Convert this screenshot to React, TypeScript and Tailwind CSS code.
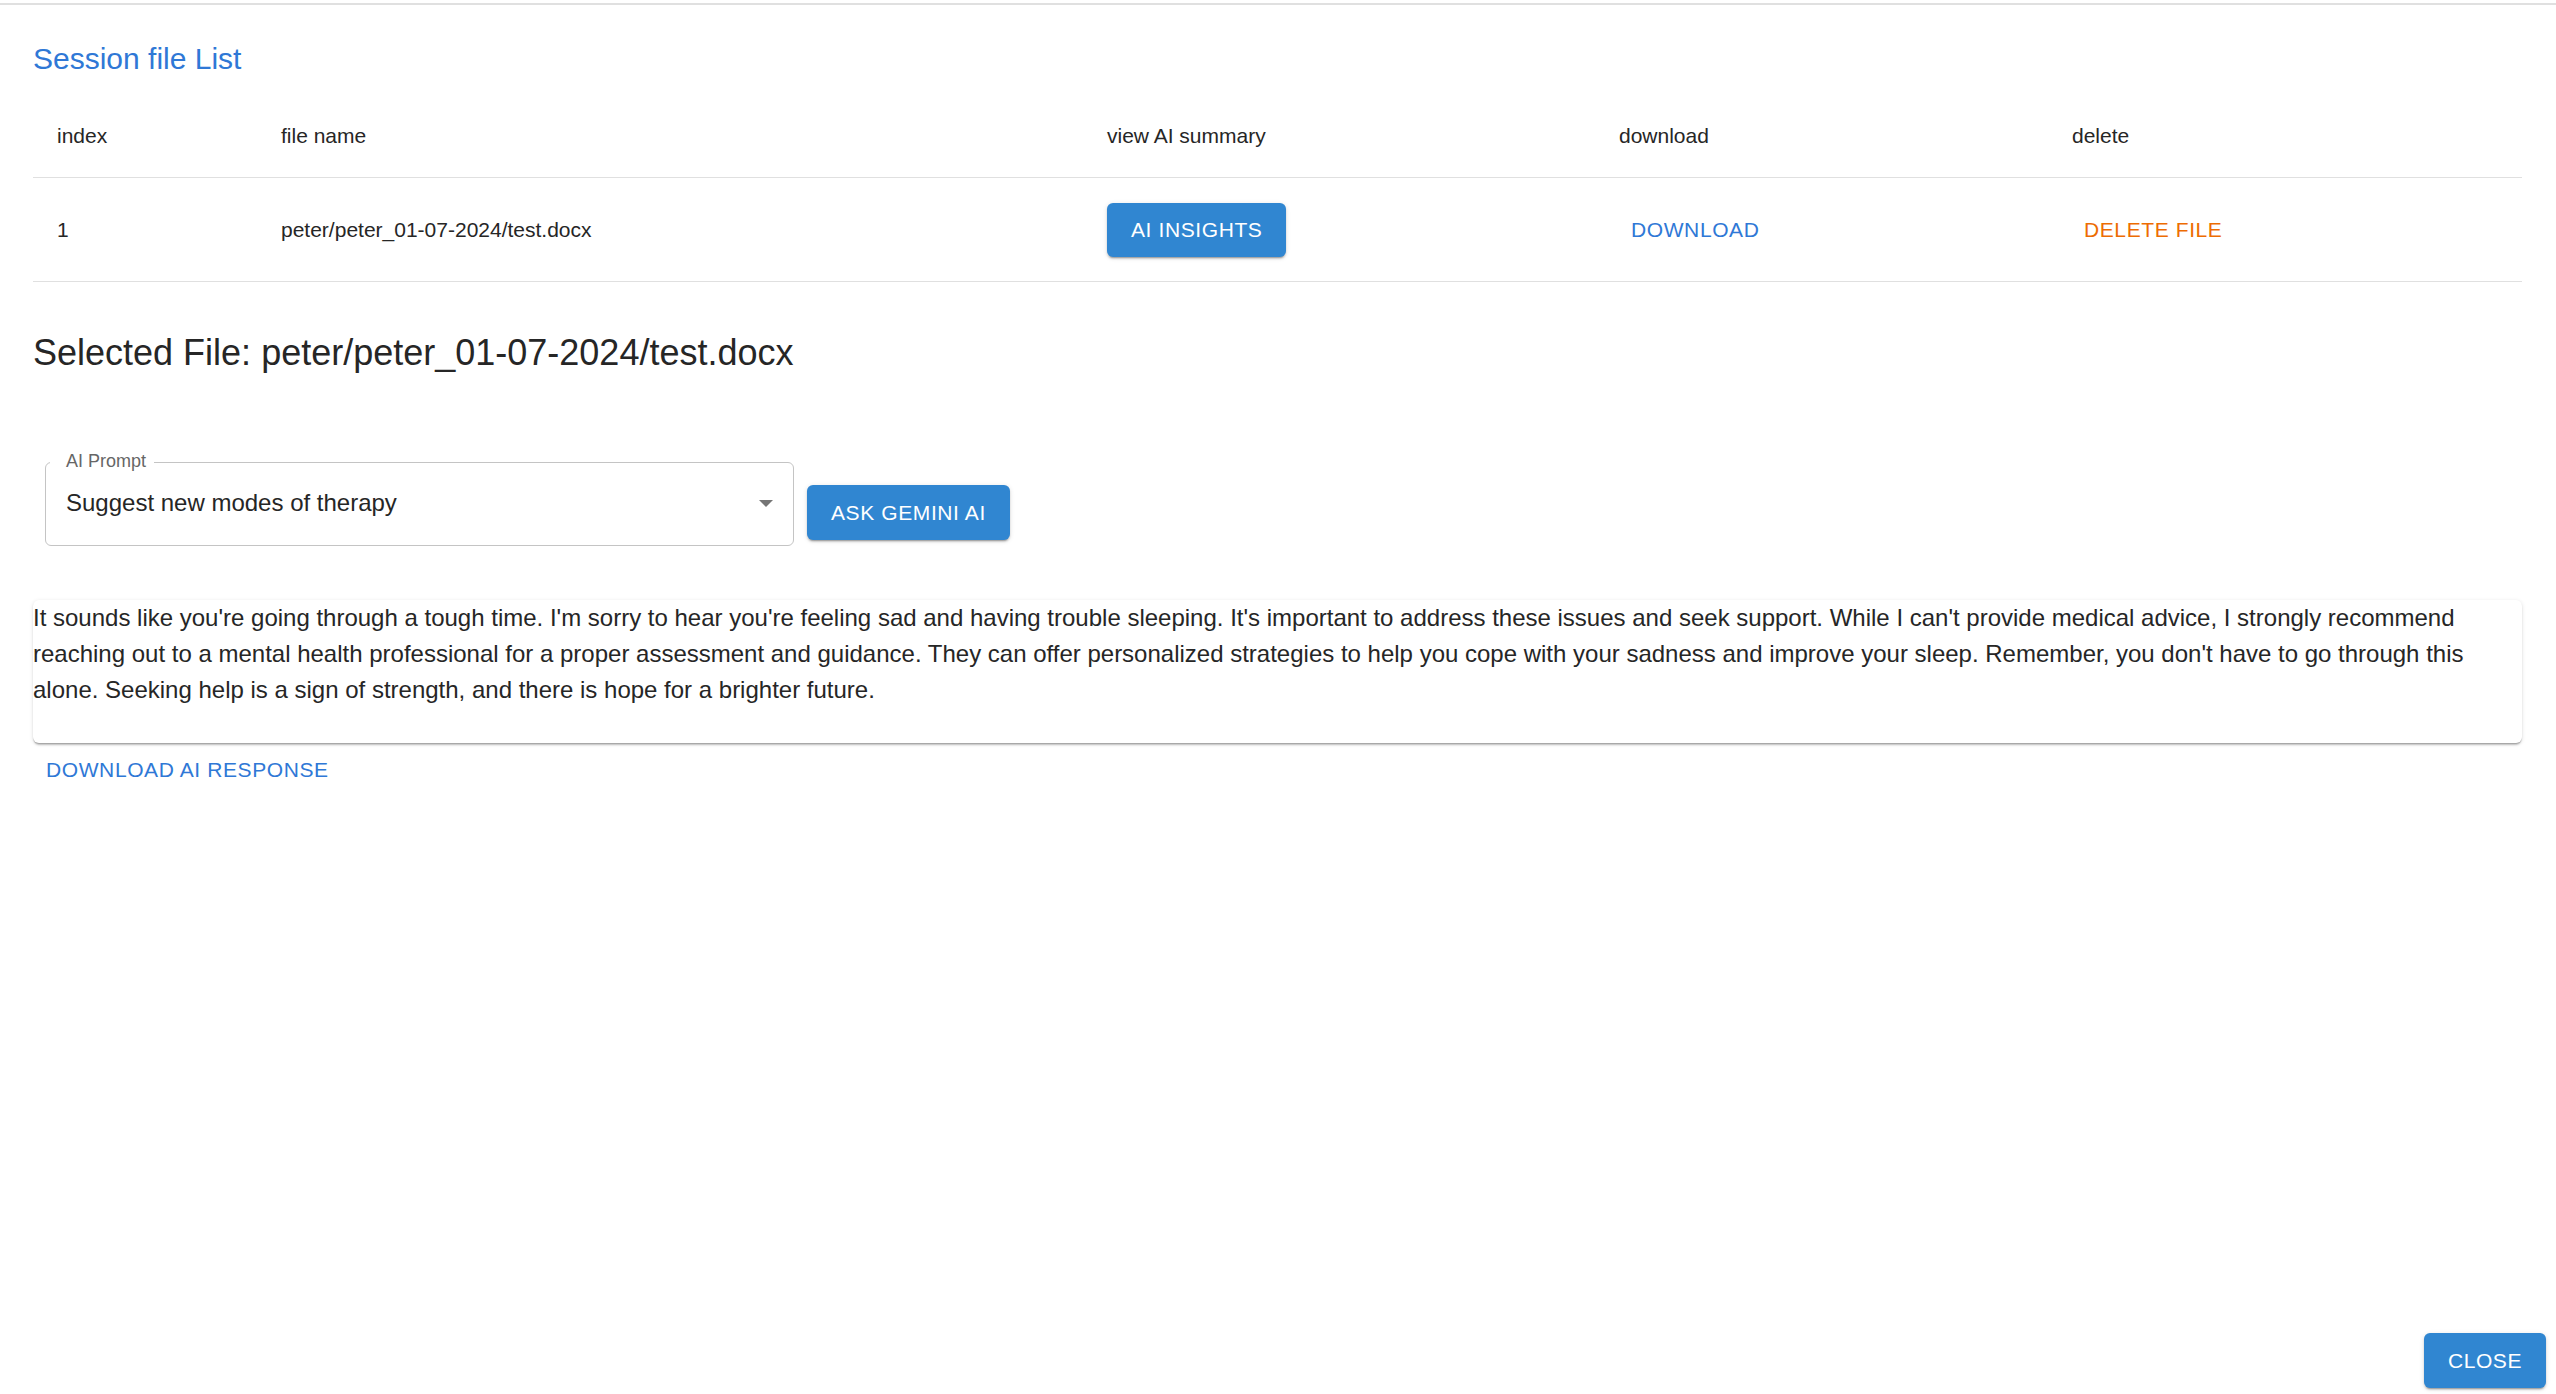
import React, { useState } from 'react';

const prompts = [
  'Summarize the session',
  'Suggest new modes of therapy',
  'List key concerns',
];

const aiResponse =
  "It sounds like you're going through a tough time. I'm sorry to hear you're feeling sad and having trouble sleeping. It's important to address these issues and seek support. While I can't provide medical advice, I strongly recommend reaching out to a mental health professional for a proper assessment and guidance. They can offer personalized strategies to help you cope with your sadness and improve your sleep. Remember, you don't have to go through this alone. Seeking help is a sign of strength, and there is hope for a brighter future.";

const files = [{ index: 1, name: 'peter/peter_01-07-2024/test.docx' }];

const containedBtn =
  'rounded-[6px] bg-[#3086d1] text-white text-[21px] leading-[36px] tracking-[0.6px] uppercase shadow-[0px_3px_1px_-2px_rgba(0,0,0,0.2),0px_2px_2px_0px_rgba(0,0,0,0.14),0px_1px_5px_0px_rgba(0,0,0,0.12)]';

const App: React.FC = () => {
  const [prompt] = useState(prompts[1]);
  const [selected] = useState(files[0].name);

  return (
    <div className="h-screen w-full flex flex-col bg-white overflow-hidden font-['Liberation_Sans',Arial,sans-serif] text-[#262626]">
      {/* top divider */}
      <div className="mt-[3px] h-[2px] bg-[#e0e0e0]" />

      <div className="pl-[33px] pr-[34px] flex flex-col">
        {/* Title */}
        <h2 className="mt-[39px] text-[30px] leading-[30px] text-[#2f78d6]">Session file List</h2>

        {/* Table */}
        <div className="mt-[20px]">
          <div className="grid grid-cols-[224px_826px_512px_453px_1fr] h-[84px] items-center border-b border-[#e0e0e0] text-[21px] leading-[30px]">
            <div className="pl-[24px]">index</div>
            <div className="pl-[24px]">file name</div>
            <div className="pl-[24px]">view AI summary</div>
            <div className="pl-[24px]">download</div>
            <div className="pl-[24px]">delete</div>
          </div>
          {files.map((f) => (
            <div
              key={f.index}
              className="grid grid-cols-[224px_826px_512px_453px_1fr] h-[104px] items-center border-b border-[#e0e0e0] text-[21px] leading-[30px]"
            >
              <div className="pl-[24px]">{f.index}</div>
              <div className="pl-[24px]">{f.name}</div>
              <div className="pl-[24px]">
                <button className={`${containedBtn} px-[24px] py-[9px]`}>AI Insights</button>
              </div>
              <div className="pl-[24px]">
                <button className="px-[12px] py-[9px] text-[21px] leading-[36px] tracking-[0.6px] text-[#2f78d6] uppercase">
                  Download
                </button>
              </div>
              <div className="pl-[24px]">
                <button className="px-[12px] py-[9px] text-[21px] leading-[36px] tracking-[0.6px] text-[#ed6c02] uppercase">
                  Delete File
                </button>
              </div>
            </div>
          ))}
        </div>

        {/* Selected file */}
        <h3 className="mt-[47px] text-[36px] leading-[48px]">Selected File: {selected}</h3>

        {/* Prompt select + ask */}
        <div className="mt-[85px] flex items-start">
          <div className="relative ml-[12px] w-[749px] h-[84px] rounded-[6px] border border-[#c4c4c4] flex items-center pl-[20px] pr-[20px] pb-[3px]">
            <span className="absolute top-[-11px] left-[4px] pl-[16px] pr-[8px] bg-white text-[18px] leading-[18px] text-[#666666]">
              AI Prompt
            </span>
            <span className="flex-1 text-[24px] leading-[34px]">{prompt}</span>
            <svg width="14" height="7" viewBox="0 0 14 7" className="mt-[2px]">
              <polygon points="0,0 14,0 7,7" fill="#757575" />
            </svg>
          </div>
          <button className={`${containedBtn} ml-[13px] mt-[23px] px-[24px] py-[9px] h-[55px]`}>Ask Gemini AI</button>
        </div>

        {/* AI response */}
        <div className="mt-[54px] h-[143px] rounded-[6px] bg-white shadow-[0px_3px_2px_-1px_rgba(0,0,0,0.2),0px_1px_1px_0px_rgba(0,0,0,0.14),0px_1px_4px_0px_rgba(0,0,0,0.12)] text-[24px] leading-[36px]">
          {aiResponse}
        </div>

        <div>
          <button className="pl-[13px] pr-[12px] py-[9px] text-[21px] leading-[36px] tracking-[0.6px] text-[#2f78d6] uppercase">
            Download AI Response
          </button>
        </div>
      </div>

      <button className={`${containedBtn} mt-auto self-end mr-[10px] mb-[6px] w-[122px] h-[55px] py-[9px]`}>Close</button>
    </div>
  );
};

export default App;
